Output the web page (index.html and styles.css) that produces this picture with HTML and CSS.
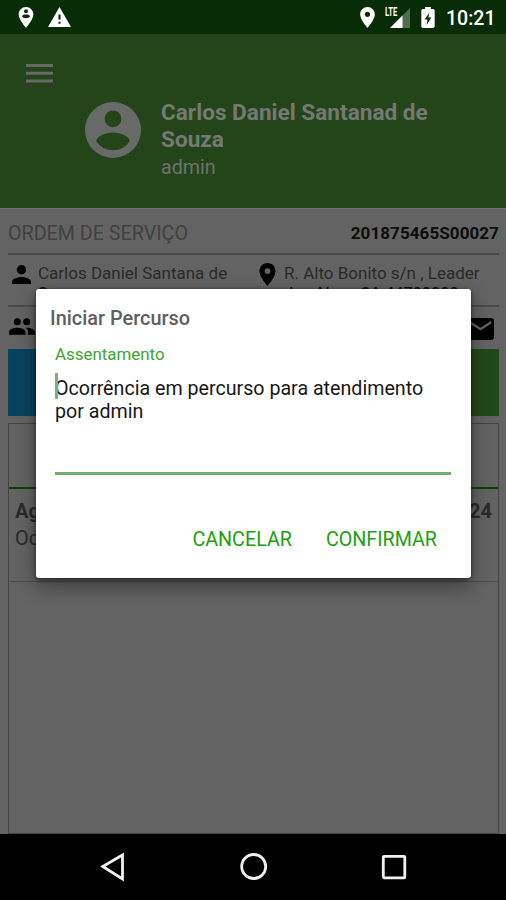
FILE: index.html
```html
<!DOCTYPE html>
<html lang="pt-BR">
<head>
<meta charset="utf-8">
<title>Ordem de Serviço</title>
<link rel="stylesheet" href="styles.css">
</head>
<body>
<div class="screen">
  <div class="status">
    <svg class="s-user" viewBox="5 2 14 20"><path fill-rule="evenodd" d="M12 2C8.100 2 5 5.100 5 9c0 5.200 7 13 7 13s7-7.800 7-13c0-3.900-3.100-7-7-7zm0 2.200a1.900 1.900 0 1 1 0 3.800 1.900 1.900 0 0 1 0-3.800zm0 8.500c-1.700 0-3.700-.8-3.700-1.900 0-1.200 2.300-1.600 3.700-1.600s3.700.4 3.700 1.600c0 1.100-2 1.900-3.700 1.900z"/></svg>
    <svg class="s-warn" viewBox="1 2 22 19"><path d="M1 21h22L12 2 1 21zm12-3h-2v-2h2v2zm0-4h-2V9h2v5z"/></svg>
    <span class="spacer"></span>
    <svg class="s-pin" viewBox="5 2 14 20"><path d="M12 2C8.130 2 5 5.130 5 9c0 5.250 7 13 7 13s7-7.750 7-13c0-3.870-3.130-7-7-7zm0 9.500a2.500 2.500 0 0 1 0-5 2.500 2.500 0 0 1 0 5z"/></svg>
    <span class="network"><span class="lte">LTE</span><svg class="s-signal" viewBox="0 0 20 20"><path class="faint" d="M0 20h20V0z"/><path d="M0 20h12.500V7.500z"/></svg></span>
    <svg class="s-battery" viewBox="0 0 14 22"><path fill-rule="evenodd" d="M1.300 2H4V0h6v2h2.700L14 3.300v17.400L12.700 22H1.300L0 20.700V3.300zM8.300 6 3.500 13H6.500l-1 6 5-8H7.500z"/></svg>
    <span class="clock">10:21</span>
  </div>

  <header class="header">
    <svg class="menu" viewBox="0 0 27 19"><path d="M0 0h27v3H0zM0 7.700h27v3H0zM0 15.500h27v3H0z"/></svg>
    <div class="profile">
      <svg class="avatar" viewBox="2 2 20 20"><path fill-rule="evenodd" d="M12 2a10 10 0 1 0 0 20 10 10 0 0 0 0-20zm0 3a3 3 0 1 1 0 6 3 3 0 0 1 0-6zm0 14.200a7.200 7.200 0 0 1-6-3.220c.03-1.990 4-3.080 6-3.080s5.970 1.090 6 3.080a7.200 7.200 0 0 1-6 3.220z"/></svg>
      <div class="who"><div class="name">Carlos Daniel Santanad de<br>Souza</div><div class="role">admin</div></div>
    </div>
  </header>

  <main class="content">
    <div class="order row"><span class="label">ORDEM DE SERVIÇO</span><span class="number">201875465S00027</span></div>
    <div class="details row">
      <svg class="i-person" viewBox="4 4 16 16"><path d="M12 12a4 4 0 1 0 0-8 4 4 0 0 0 0 8zm0 2c-2.670 0-8 1.340-8 4v2h16v-2c0-2.660-5.330-4-8-4z"/></svg>
      <div class="client">Carlos Daniel Santana de<br><b>Souza</b></div>
      <svg class="i-place" viewBox="5 2 14 20"><path d="M12 2C8.130 2 5 5.130 5 9c0 5.250 7 13 7 13s7-7.750 7-13c0-3.870-3.130-7-7-7zm0 9.500a2.500 2.500 0 0 1 0-5 2.500 2.500 0 0 1 0 5z"/></svg>
      <div class="address">R. Alto Bonito s/n , Leader<br><b>dos Aires, CA 44700000</b></div>
    </div>
    <div class="contacts">
      <svg class="i-group" viewBox="1 5 22 14"><path d="M16 11a3 3 0 1 0 0-6 3 3 0 0 0 0 6zm-8 0a3 3 0 1 0 0-6 3 3 0 0 0 0 6zm0 2c-2.330 0-7 1.170-7 3.500V19h14v-2.500C15 14.170 10.330 13 8 13zm8 0c-.29 0-.62.020-.97.050C16.190 13.890 17 15.020 17 16.500V19h6v-2.500c0-2.330-4.670-3.500-7-3.500z"/></svg>
      <svg class="i-mail" viewBox="2 4 20 16" preserveAspectRatio="none"><path d="M20 4H4c-1.100 0-2 .9-2 2v12c0 1.100.9 2 2 2h16c1.100 0 2-.9 2-2V6c0-1.100-.9-2-2-2zm0 4-8 5-8-5V6l8 5 8-5v2z"/></svg>
    </div>
    <div class="actions"><span class="blue"></span><span class="green"></span></div>
    <section class="history">
      <div class="tab"></div>
      <div class="entry"><div class="entry-head"><span>Agendamento</span><span>10:24</span></div><div>Ocorrência</div></div>
    </section>
  </main>

  <nav class="navbar">
    <svg viewBox="0 0 30 30"><path d="M4.800 14.500 24.500 3v24z"/></svg>
    <svg viewBox="0 0 30 30"><circle cx="14.700" cy="14.500" r="12"/></svg>
    <svg viewBox="0 0 30 30"><rect x="4.300" y="4.300" width="21.500" height="21.500" rx=".8"/></svg>
  </nav>

  <div class="dialog">
    <h2>Iniciar Percurso</h2>
    <div class="field">
      <label>Assentamento</label>
      <div class="input"><i class="caret"></i>Ocorrência em percurso para atendimento<br>por admin</div>
    </div>
    <div class="buttons"><span class="cancel">CANCELAR</span><span class="confirm">CONFIRMAR</span></div>
  </div>
</div>
</body>
</html>
```
FILE: styles.css
```css
* { box-sizing: border-box; }
body { margin: 0; font-family: Roboto, "Liberation Sans", sans-serif; }
svg { display: block; flex: none; }
.screen { position: relative; width: 506px; height: 900px; overflow: hidden; display: flex; flex-direction: column; background: #636363; }

.status { height: 34px; flex: none; display: flex; align-items: flex-start; padding: 7px 11px 0 18px; background: #082c06; fill: #fff; color: #fff; }
.s-user { width: 16px; height: 21px; }
.s-warn { width: 23px; height: 20px; margin-left: 14px; }
.spacer { flex: 1; }
.s-pin { width: 15px; height: 21px; }
.network { position: relative; width: 26px; height: 21px; margin-left: 9px; display: flex; justify-content: flex-end; }
.lte { position: absolute; left: 1px; top: 0; font-size: 12px; line-height: 11px; font-weight: 700; transform: scaleX(.64); transform-origin: left; }
.s-signal { width: 20px; height: 20px; margin-top: 1px; }
.faint { opacity: .3; }
.s-battery { width: 14px; height: 21px; margin-left: 11px; }
.clock { margin-left: 11px; font-size: 19.500px; line-height: 23px; font-weight: 500; width: 49px; white-space: nowrap; }

.header { height: 174px; flex: none; padding: 30px 26px 0; background: #24451a; color: #747973; }
.menu { width: 27px; height: 19px; fill: #666966; }
.profile { display: flex; padding: 16px 0 0 59px; }
.avatar { width: 56px; height: 56px; margin-top: 3px; fill: #686a67; }
.who { margin-left: 20px; white-space: nowrap; }
.name { font-size: 22.600px; line-height: 27px; font-weight: 700; }
.role { font-size: 19.700px; line-height: 30px; color: #6d7369; }

.content { flex: 1; min-height: 0; padding: 0 7px 0 8px; display: flex; flex-direction: column; border-top: 1px solid #707070; color: #2a2a2a; }
.row { border-bottom: 2px solid #4b4b4b; flex: none; }
.order { height: 46px; display: flex; justify-content: space-between; align-items: center; padding-top: 4px; }
.label { font-size: 19.700px; color: #414141; }
.number { font-size: 17px; font-weight: 700; color: #0c0c0c; letter-spacing: .08px; }
.details { height: 52px; display: flex; padding: 8px 0 0 4px; overflow: hidden; font-size: 17px; line-height: 20px; white-space: nowrap; }
.details b { color: #111; font-weight: 500; display: inline-block; line-height: 16px; font-size: 16.200px; }
.i-person { width: 19px; height: 19px; margin-top: 2px; }
.client { width: 220px; margin-left: 7px; }
.i-place { width: 17px; height: 23px; margin-left: 1px; }
.address { margin-left: 8px; }
.i-person, .i-place, .i-group, .i-mail { fill: #000; }
.contacts { height: 42px; flex: none; display: flex; justify-content: space-between; align-items: flex-start; padding: 11px 5px 0 1px; }
.i-group { width: 26px; height: 17px; }
.i-mail { width: 27px; height: 22px; }
.actions { height: 67px; flex: none; display: flex; }
.blue, .green { flex: 1; }
.blue { background: #07435f; }
.green { background: #21481a; }
.history { flex: 1; margin-top: 7px; border: 1px solid #454545; background: #636363; }
.tab { height: 65px; border-bottom: 2px solid #0c4208; }
.entry { height: 93px; padding: 9px 6px 0; border-bottom: 1px solid #4c4c4c; font-size: 20px; line-height: 27px; }
.entry-head { display: flex; justify-content: space-between; font-weight: 700; }

.navbar { height: 66px; flex: none; background: #000; display: flex; justify-content: space-between; padding: 18px 97px 0 98px; }
.navbar svg { width: 30px; height: 30px; fill: none; stroke: #f1f1f1; stroke-width: 2.800; }

.dialog { position: absolute; left: 36px; top: 289px; width: 435px; height: 289px; padding: 17px 20px 0 19px; background: #fff; border-radius: 3px; box-shadow: 0 8px 20px rgba(0,0,0,.4), 0 1px 4px rgba(0,0,0,.5); white-space: nowrap; }
.dialog h2 { margin: 0 0 0 -5px; font-size: 19.900px; line-height: 25px; font-weight: 500; color: #5f5f5f; }
.field label { display: block; margin-top: 13px; font-size: 16.900px; line-height: 20px; color: #3da631; }
.input { position: relative; height: 111px; padding-top: 13px; border-bottom: 3px solid #70ad69; font-size: 19.650px; line-height: 23px; color: #171717; }
.caret { position: absolute; left: 0; top: 9px; width: 3px; height: 26px; background: #73b66c; }
.buttons { display: flex; justify-content: flex-end; gap: 34px; padding: 53px 14px 0 0; font-size: 19.700px; line-height: 24px; color: #21a00e; font-weight: 400; }
```
